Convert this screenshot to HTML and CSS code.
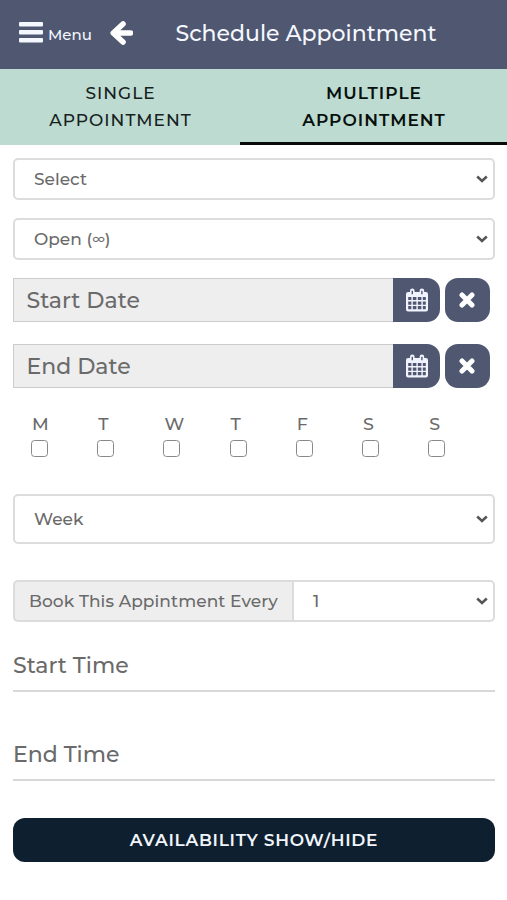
FILE: index.html
```html
<!DOCTYPE html>
<html lang="en">
<head>
<meta charset="utf-8">
<title>Schedule Appointment</title>
<link rel="stylesheet" href="styles.css">
</head>
<body>
<svg class="defs" width="0" height="0" aria-hidden="true">
  <symbol id="chevron" viewBox="0 0 12 8"><path d="M1.200 1.500 6 6l4.800-4.500" fill="none" stroke="#555" stroke-width="2.500"/></symbol>
  <symbol id="calendar" viewBox="0 0 22 24">
    <path fill="#f1f4ff" fill-rule="evenodd" d="M2 4h2V2.800a2.300 2.300 0 0 1 4.600 0V4h5V2.800a2.300 2.300 0 0 1 4.600 0V4H20a2 2 0 0 1 2 2v15.500a2 2 0 0 1-2 2H2a2 2 0 0 1-2-2V6a2 2 0 0 1 2-2zM5.600 2.700v3.600h1.400V2.700zM15.200 2.700v3.600h1.400V2.700zM2.200 9v3.100h3.200V9zM6.800 9v3.100h3.600V9zM11.800 9v3.100h3.600V9zM16.800 9v3.100h3V9zM2.200 13.500v3.200h3.200v-3.200zM6.800 13.500v3.200h3.600v-3.200zM11.800 13.500v3.200h3.600v-3.200zM16.800 13.500v3.200h3v-3.200zM2.200 18.100v3.200h3.200v-3.200zM6.800 18.100v3.200h3.600v-3.200zM11.800 18.100v3.200h3.600v-3.200zM16.800 18.100v3.200h3v-3.200z"/>
  </symbol>
  <symbol id="cross" viewBox="0 0 16 16"><path d="M3 3l10 10M13 3 3 13" fill="none" stroke="#fff" stroke-width="5" stroke-linecap="round"/></symbol>
</svg>
<header class="bar">
  <svg class="burger" viewBox="0 0 24 21"><path fill="#f5f7ff" d="M1 0h22q1 0 1 1v2.400q0 1-1 1H1q-1 0-1-1V1q0-1 1-1zM1 8h22q1 0 1 1v2.400q0 1-1 1H1q-1 0-1-1V9q0-1 1-1zM1 16h22q1 0 1 1v2.400q0 1-1 1H1q-1 0-1-1V17q0-1 1-1z"/></svg>
  <span class="menu">Menu</span>
  <svg class="back" viewBox="0 0 23 24"><path d="M13 3 3.300 12l9.700 9M5 12h15.500" fill="none" stroke="#fff" stroke-width="5.600" stroke-linecap="round" stroke-linejoin="round"/></svg>
  <h1 class="title">Schedule Appointment</h1>
</header>
<nav class="tabs">
  <a class="tab">SINGLE<br>APPOINTMENT</a>
  <a class="tab active">MULTIPLE<br>APPOINTMENT</a>
</nav>
<main class="form">
  <div class="select"><span>Select</span><svg class="chev"><use href="#chevron"/></svg></div>
  <div class="select second"><span>Open (<span class="inf">∞</span>)</span><svg class="chev"><use href="#chevron"/></svg></div>
  <div class="date">
    <div class="field">Start Date</div>
    <button class="btn cal"><svg><use href="#calendar"/></svg></button>
    <button class="btn clear"><svg><use href="#cross"/></svg></button>
  </div>
  <div class="date">
    <div class="field">End Date</div>
    <button class="btn cal"><svg><use href="#calendar"/></svg></button>
    <button class="btn clear"><svg><use href="#cross"/></svg></button>
  </div>
  <div class="days">
    <label class="day">M<input type="checkbox"></label>
    <label class="day">T<input type="checkbox"></label>
    <label class="day">W<input type="checkbox"></label>
    <label class="day">T<input type="checkbox"></label>
    <label class="day">F<input type="checkbox"></label>
    <label class="day">S<input type="checkbox"></label>
    <label class="day">S<input type="checkbox"></label>
  </div>
  <div class="select week"><span>Week</span><svg class="chev"><use href="#chevron"/></svg></div>
  <div class="group">
    <div class="addon">Book This Appintment Every</div>
    <div class="select every"><span>1</span><svg class="chev"><use href="#chevron"/></svg></div>
  </div>
  <div class="time">Start Time</div>
  <div class="time end">End Time</div>
  <button class="avail">AVAILABILITY SHOW/HIDE</button>
</main>
</body>
</html>
```

FILE: styles.css
```css
* { box-sizing: border-box; }
body { margin: 0; height: 900px; background: #fff; color: #6a6a6a; font-family: Montserrat, Inter, sans-serif; font-size: 17px; font-weight: 500; overflow: hidden; }
.defs { display: block; }
.bar { display: flex; align-items: center; height: 69px; padding-left: 19px; background: #4f5870; color: #f5f7ff; }
.burger { width: 24px; height: 21px; margin-bottom: 5px; }
.menu { width: 56px; margin-left: 5px; font-size: 15px; white-space: nowrap; }
.back { width: 23px; height: 24px; margin: 0 0 4px 6px; }
.title { margin: 0 0 2px 42.500px; font-size: 22px; font-weight: 500; white-space: nowrap; }
.tabs { display: grid; grid-template-columns: 240px 1fr; height: 76px; background: #bddbd1; }
.tab { padding: 11px 0 0 1px; text-align: center; line-height: 26.500px; color: #17211e; letter-spacing: 1px; }
.tab.active { border-bottom: 3px solid #080b0a; color: #07100d; font-weight: 600; }
.form { padding: 13px 12px 0 13px; }
.select { display: flex; align-items: center; justify-content: space-between; height: 42px; padding: 0 5px 0 19px; border: 2px solid #dcdcdc; border-radius: 5px; background: #fff; }
.chev { width: 12px; height: 8px; }
.second { margin-top: 18px; }
.inf { font-size: 13.500px; position: relative; top: -1px; }
.date { display: flex; height: 44px; margin-top: 18px; }
.date + .date { margin-top: 22px; }
.field { width: 380px; padding-left: 12.500px; border: 1px solid #ccc; border-right: 0; background: #eee; font-size: 22px; line-height: 43px; }
.btn { display: flex; align-items: center; justify-content: center; padding: 0; border: 0; background: #4f5870; }
.cal { width: 46.500px; border-radius: 0 13px 13px 0; }
.cal svg { width: 22px; height: 24px; margin-left: 2px; }
.clear { width: 45.500px; margin-left: 5px; border-radius: 13px; }
.clear svg { width: 16px; height: 16px; }
.days { display: grid; grid-template-columns: repeat(7, 66.2px); margin-top: 24px; padding-left: 18px; }
.day { display: flex; flex-direction: column; padding-left: 1px; font-size: 17.500px; line-height: 24px; }
.day input { appearance: none; width: 17px; height: 17px; margin: 4px 0 0 -1px; border: 1.500px solid #888; border-radius: 3.500px; background: #fff; }
.week { height: 50px; margin-top: 37px; }
.group { display: flex; height: 42px; margin-top: 36px; }
.addon { display: flex; align-items: center; width: 279px; padding-left: 14px; border: 2px solid #dcdcdc; border-right: 0; border-radius: 5px 0 0 5px; background: #eee; letter-spacing: .08px; white-space: nowrap; }
.every { flex: 1; border-radius: 0 5px 5px 0; }
.time { height: 55px; margin-top: 15px; padding-top: 15px; border-bottom: 2px solid #d8d8d8; font-size: 22px; line-height: 28px; }
.end { margin-top: 34px; }
.avail { display: block; width: 100%; height: 44px; margin-top: 37px; padding: 0; border: 0; border-radius: 12px; background: #0e1f2f; color: #f1f5fb; font: 600 17px Montserrat, Inter, sans-serif; letter-spacing: .7px; }
```
